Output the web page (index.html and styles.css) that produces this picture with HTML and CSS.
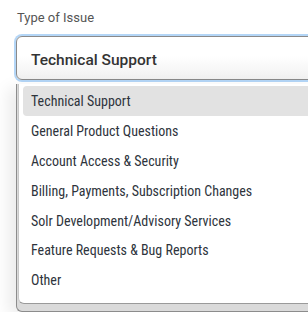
FILE: index.html
```html
<!DOCTYPE html>
<html lang="en">
<head>
    <meta charset="utf-8" />
    <title>Type of Issue</title>
    <link rel="stylesheet" href="styles.css">
</head>
<body>
    <div class="field">
        <label class="field-label">Type of Issue</label>

        <div class="select">Technical Support</div>

        <div class="dropdown">
            <ul class="menu">
                <li class="option active">Technical Support</li>
                <li class="option">General Product Questions</li>
                <li class="option">Account Access &amp; Security</li>
                <li class="option">Billing, Payments, Subscription Changes</li>
                <li class="option">Solr Development/Advisory Services</li>
                <li class="option">Feature Requests &amp; Bug Reports</li>
                <li class="option">Other</li>
            </ul>
        </div>
    </div>
</body>
</html>
```

FILE: styles.css
```css
body {
    margin: 0;
    padding: 0;
    background-color: #fff;
    font-family: Roboto, 'Liberation Sans', sans-serif;
    color: #333;
    overflow: hidden;
}

.field {
    padding: 9px 0 0 16px;
}

.field-label {
    display: block;
    font-size: 13px;
    color: #555;
    line-height: 18px;
    margin: 0 0 9px 1px;
}

.select {
    height: 44px;
    box-sizing: border-box;
    margin-right: -10px;
    padding: 3px 14px 0;
    display: flex;
    align-items: center;
    font-size: 15.5px;
    font-weight: 500;
    color: #333;
    border: 1px solid #8a8a8a;
    border-radius: 6px;
    background: linear-gradient(#fff 45%, #f1f1f1);
    box-shadow: 0 0 0 2px #b4d6f7;
}

.dropdown {
    margin-top: 4px;
    margin-right: -10px;
    height: 227px;
    border-left: 1px solid #8c8c8c;
    border-bottom: 1px solid #8c8c8c;
    border-bottom-left-radius: 6px;
    background: #dadada;
    box-shadow: -8px 4px 16px rgba(0, 0, 0, 0.08);
}

.menu {
    list-style: none;
    margin: 0 0 0 1px;
    padding: 2px 0 5px 4px;
    height: 220px;
    box-sizing: border-box;
    background: #fff;
    border-left: 1px solid #c8c8c8;
    border-bottom: 1px solid #9a9a9a;
    border-bottom-left-radius: 6px;
}

.option {
    height: 29.9px;
    display: flex;
    align-items: center;
    padding-left: 8px;
    font-family: 'Liberation Sans Narrow', 'Roboto Condensed', Roboto, sans-serif;
    font-size: 14px;
    color: #2e343c;
    border-radius: 4px;
}

.option.active {
    background: #e2e2e2;
}
```
